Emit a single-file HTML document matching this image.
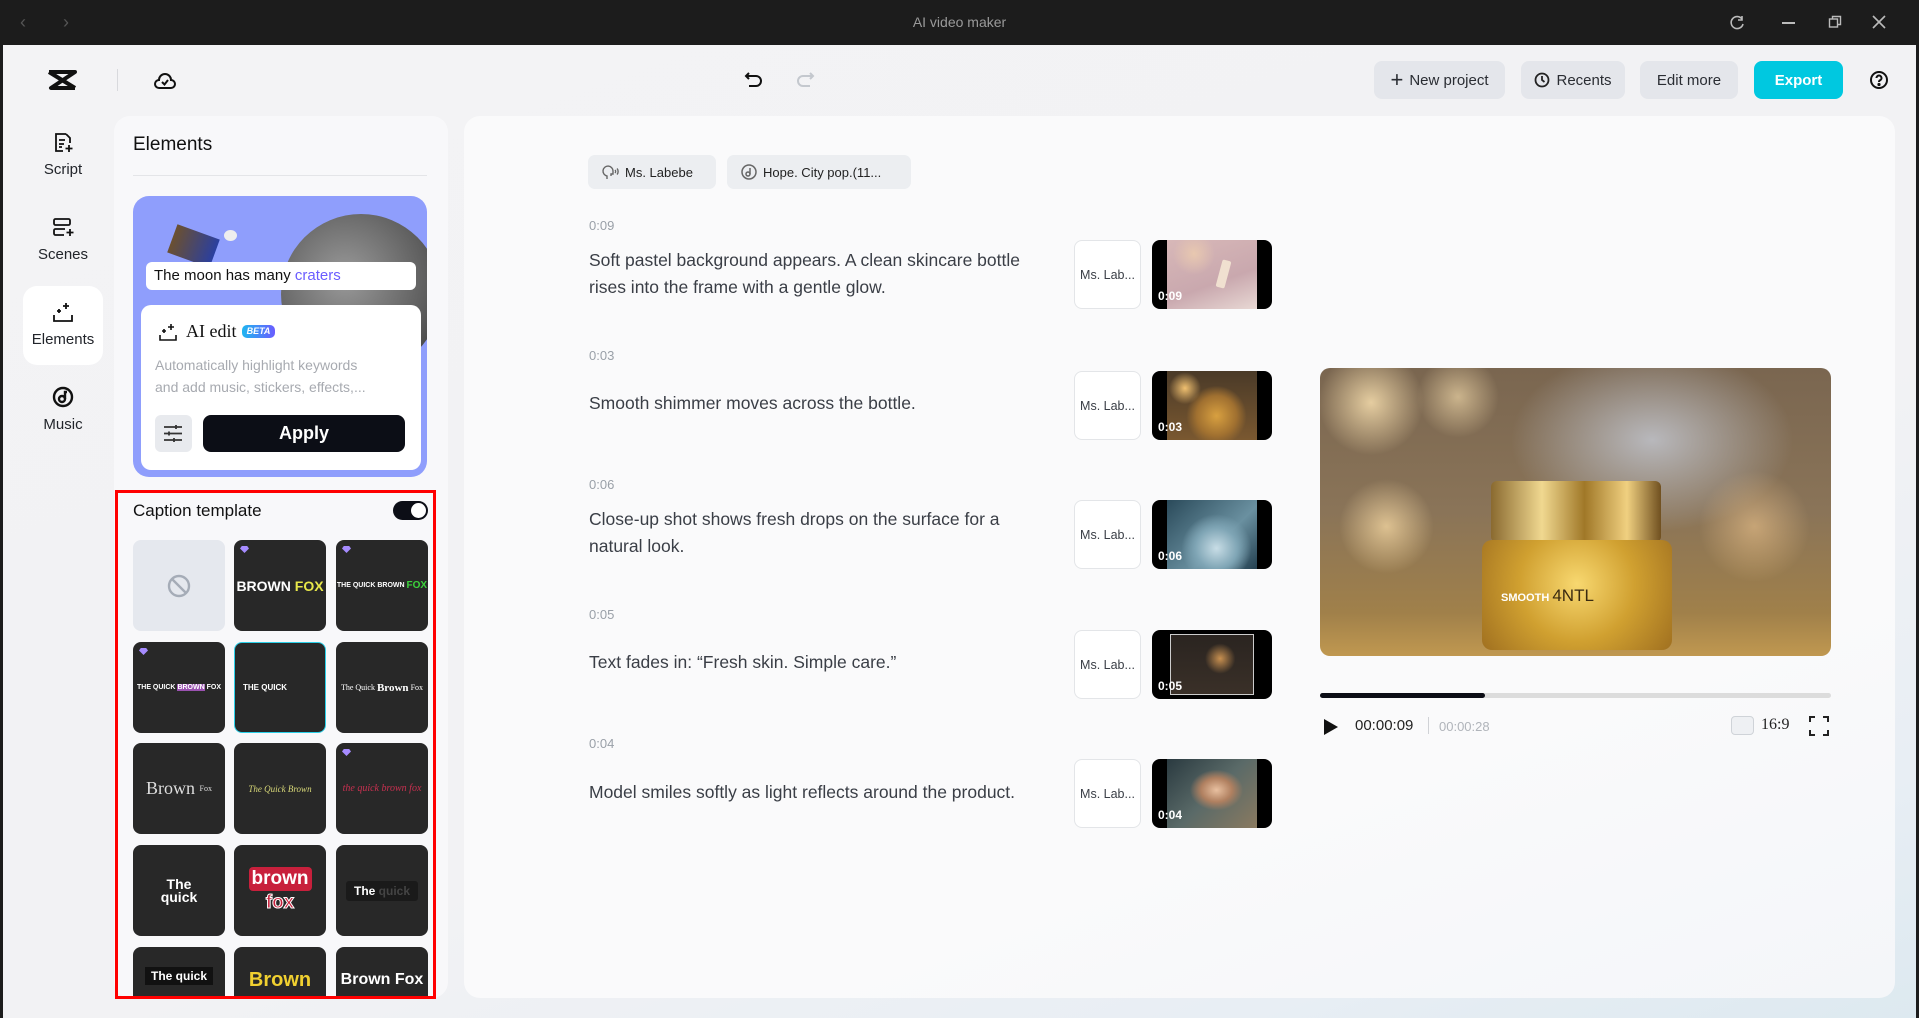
<!DOCTYPE html>
<html><head><meta charset="utf-8">
<style>
*{box-sizing:border-box;margin:0;padding:0}
body{width:1919px;height:1018px;overflow:hidden;font-family:"Liberation Sans",sans-serif;background:#1c1c1c;position:relative;color:#1a1d24}
.abs{position:absolute}
#app{position:absolute;left:3px;top:45px;width:1913px;height:973px;background:linear-gradient(160deg,#f3f3f5 0%,#f2f2f4 60%,#e8eef4 85%,#dde9f0 100%)}
.btn{position:absolute;top:61px;height:38px;border-radius:8px;background:#e4e6eb;font-size:15px;color:#2a2d33;display:flex;align-items:center;justify-content:center;gap:6px}
.rail{position:absolute;width:80px;text-align:center;font-size:15px;color:#22252b}
.tile{position:absolute;width:92px;height:91px;border-radius:8px;background:#282828;color:#fff;display:flex;align-items:center;justify-content:center;overflow:hidden;font-weight:bold}
.gem{position:absolute;left:6px;top:6px;width:9px;height:7px;background:#a68bff;clip-path:polygon(20% 0,80% 0,100% 35%,50% 100%,0 35%)}
.time{position:absolute;left:589px;font-size:13px;color:#9aa0a8}
.txt{position:absolute;left:589px;font-size:17.5px;color:#3a3e46;line-height:27px;width:450px}
.ms{position:absolute;left:1074px;width:67px;height:69px;border:1px solid #e3e5e8;border-radius:8px;background:#fff;font-size:12.5px;color:#3a3e46;display:flex;align-items:center;justify-content:center}
.th{position:absolute;left:1152px;width:120px;height:69px;border-radius:8px;background:#000;overflow:hidden}
.th .in{position:absolute;left:15px;right:15px;top:0;bottom:0}
.th span{position:absolute;left:6px;bottom:6px;color:#fff;font-size:12px;font-weight:bold}
</style></head><body>
<div class="abs" style="left:20px;top:12px;color:#555;font-size:18px">&#8249;</div>
<div class="abs" style="left:63px;top:12px;color:#555;font-size:18px">&#8250;</div>
<div class="abs" style="left:0;width:1919px;top:14px;text-align:center;color:#9a9a9a;font-size:14px">AI video maker</div>
<svg class="abs" style="left:1728px;top:14px" width="18" height="18" viewBox="0 0 18 18" fill="none" stroke="#bbb" stroke-width="1.6"><path d="M14 5A6 6 0 1 0 15 10"/><path d="M14 2v4h-4"/></svg>
<div class="abs" style="left:1782px;top:22px;width:13px;height:1.5px;background:#bbb"></div>
<svg class="abs" style="left:1828px;top:15px" width="14" height="14" fill="none" stroke="#bbb" stroke-width="1.4"><rect x="1.5" y="4" width="8" height="8"/><path d="M4.5 4V1.5h8v8H10"/></svg>
<svg class="abs" style="left:1871px;top:14px" width="16" height="16" stroke="#bbb" stroke-width="1.6"><path d="M2 2l12 12M14 2L2 14"/></svg>

<div id="app"></div>
<svg class="abs" style="left:47px;top:69px" width="30" height="22" viewBox="0 0 30 22"><path d="M2 3h26L4 19h24" fill="none" stroke="#111" stroke-width="4" stroke-linejoin="round"/><path d="M2 3l26 16" fill="none" stroke="#111" stroke-width="4"/></svg>
<div class="abs" style="left:117px;top:69px;width:1px;height:22px;background:#d8d9dd"></div>
<svg class="abs" style="left:153px;top:70px" width="24" height="20" viewBox="0 0 24 20" fill="none" stroke="#111" stroke-width="2"><path d="M6 18h12a4 4 0 0 0 0-8 6 6 0 0 0-12 0 4 4 0 0 0 0 8z"/><path d="M9 12l2.5 2.5L15 10"/></svg>
<svg class="abs" style="left:744px;top:70px" width="20" height="20" fill="none" stroke="#111" stroke-width="2"><path d="M5 3L2 6l3 3"/><path d="M2 6h10a5 5 0 0 1 0 10H5"/></svg>
<svg class="abs" style="left:795px;top:70px" width="20" height="20" fill="none" stroke="#c4c8ce" stroke-width="2"><path d="M15 3l3 3-3 3"/><path d="M18 6H8a5 5 0 0 0 0 10h7"/></svg>

<div class="btn" style="left:1374px;width:131px"><span style="font-size:22px;font-weight:300">+</span>New project</div>
<div class="btn" style="left:1521px;width:104px"><svg width="16" height="16" fill="none" stroke="#222" stroke-width="1.8"><circle cx="8" cy="8" r="6.5"/><path d="M8 4v4l2.5 2"/></svg>Recents</div>
<div class="btn" style="left:1640px;width:98px">Edit more</div>
<div class="btn" style="left:1754px;width:89px;background:#00c8e0;color:#fff;font-weight:bold">Export</div>
<svg class="abs" style="left:1869px;top:70px" width="20" height="20" fill="none" stroke="#111" stroke-width="2"><circle cx="10" cy="10" r="8"/><path d="M7.5 8a2.5 2.5 0 1 1 3.5 2.3c-.7.4-1 .9-1 1.7"/><circle cx="10" cy="14.5" r=".6" fill="#111"/></svg>

<svg class="abs" style="left:52px;top:132px" width="22" height="22" fill="none" stroke="#111" stroke-width="1.8"><path d="M14 2H4v17h7"/><path d="M14 2l4 4v5"/><path d="M7 8h6M7 12h5M7 15h3"/><path d="M17 13v7M13.5 16.5h7"/></svg>
<div class="rail" style="left:23px;top:161px">Script</div>
<svg class="abs" style="left:52px;top:217px" width="22" height="22" fill="none" stroke="#111" stroke-width="1.8"><rect x="2" y="2" width="16" height="6" rx="1.5"/><path d="M13 12H3.5A1.5 1.5 0 0 0 2 13.5v3A1.5 1.5 0 0 0 3.5 18H12"/><path d="M18 12v7M14.5 15.5h7"/></svg>
<div class="rail" style="left:23px;top:246px">Scenes</div>
<div class="abs" style="left:23px;top:286px;width:80px;height:79px;background:#fff;border-radius:14px"></div>
<svg class="abs" style="left:52px;top:301px" width="22" height="22" fill="none" stroke="#111" stroke-width="1.8"><path d="M2 14v6h18v-6"/><path d="M14 2v6M11 5h6M7 8v4M5 10h4" /></svg>
<div class="rail" style="left:23px;top:331px">Elements</div>
<svg class="abs" style="left:52px;top:386px" width="22" height="22" fill="none" stroke="#111" stroke-width="2.4"><circle cx="11" cy="11" r="9"/><circle cx="10" cy="13" r="3"/><path d="M13 13V6h2"/></svg>
<div class="rail" style="left:23px;top:416px">Music</div>

<div class="abs" style="left:114px;top:116px;width:334px;height:882px;background:#f8f8fa;border-radius:16px"></div>
<div class="abs" style="left:133px;top:134px;font-size:19px;color:#111">Elements</div>
<div class="abs" style="left:133px;top:175px;width:294px;height:1px;background:#e4e5e8"></div>
<div class="abs" style="left:133px;top:196px;width:294px;height:281px;background:#8f9efc;border-radius:16px;overflow:hidden">
 <div class="abs" style="left:148px;top:18px;width:160px;height:160px;border-radius:50%;background:radial-gradient(circle at 40% 40%,#9a9a9a,#5e5e5e 60%,#333)"></div>
 <div class="abs" style="left:38px;top:35px;width:45px;height:30px;background:linear-gradient(90deg,#6b5030,#2a3fa0);transform:rotate(20deg)"></div>
 <div class="abs" style="left:91px;top:34px;width:13px;height:11px;border-radius:50%;background:#eee"></div>
</div>
<div class="abs" style="left:146px;top:262px;width:270px;height:28px;background:#fff;border-radius:6px;font-size:15px;padding:5px 8px;color:#111">The moon has many <span style="color:#6a5cff">craters</span></div>
<div class="abs" style="left:141px;top:305px;width:280px;height:165px;background:#fff;border-radius:10px"></div>
<svg class="abs" style="left:158px;top:322px" width="20" height="20" fill="none" stroke="#111" stroke-width="1.6"><path d="M2 13v5h16v-5"/><path d="M13 2v6M10 5h6M6 7v4M4 9h4"/></svg>
<div class="abs" style="left:186px;top:321px;font-family:'Liberation Serif',serif;font-size:18px;color:#111">AI edit</div>
<div class="abs" style="left:242px;top:325px;width:33px;height:13px;border-radius:5px;background:linear-gradient(90deg,#1fb6f0,#6a5cff);color:#fff;font-size:9px;font-style:italic;font-weight:bold;text-align:center;line-height:13px">BETA</div>
<div class="abs" style="left:155px;top:354px;font-size:14px;color:#a7aab0;line-height:22px">Automatically highlight keywords<br>and add music, stickers, effects,...</div>
<div class="abs" style="left:155px;top:415px;width:37px;height:37px;background:#e8eaee;border-radius:6px"></div>
<svg class="abs" style="left:163px;top:424px" width="20" height="19" stroke="#333" stroke-width="1.8"><path d="M1 3h18M1 9.5h18M1 16h18"/><path d="M13 1v4M6 7.5v4M11 14v4"/></svg>
<div class="abs" style="left:203px;top:415px;width:202px;height:37px;background:#0c0e16;border-radius:8px;color:#fff;font-size:18px;font-weight:bold;text-align:center;line-height:37px">Apply</div>

<div class="abs" style="left:115px;top:490px;width:321px;height:509px;border:3px solid #ff0000"></div>
<div class="abs" style="left:133px;top:501px;font-size:17px;color:#111">Caption template</div>
<div class="abs" style="left:393px;top:501px;width:35px;height:19px;background:#0c0e16;border-radius:10px"><div class="abs" style="left:18px;top:2px;width:15px;height:15px;border-radius:50%;background:#fff"></div></div>
<div class="abs" style="left:118px;top:530px;width:315px;height:466px;overflow:hidden">
 <div class="tile" style="left:15px;top:10px;background:#e5e8ee"><svg width="24" height="24" fill="none" stroke="#a5acb7" stroke-width="2.4"><circle cx="12" cy="12" r="10"/><path d="M5 5l14 14"/></svg></div>
 <div class="tile" style="left:116px;top:10px;font-size:14px"><div class="gem"></div>BROWN&nbsp;<span style="color:#e8e84a">FOX</span></div>
 <div class="tile" style="left:218px;top:10px;font-size:7px"><div class="gem"></div>THE QUICK BROWN&nbsp;<span style="color:#3cd23c;font-size:10px">FOX</span></div>
 <div class="tile" style="left:15px;top:112px;font-size:7px"><div class="gem"></div>THE QUICK&nbsp;<span style="background:#9a52b0">BROWN</span>&nbsp;FOX</div>
 <div class="tile" style="left:116px;top:112px;font-size:8px;border:1px solid #2ad0e8;justify-content:flex-start;padding-left:8px">THE QUICK</div>
 <div class="tile" style="left:218px;top:112px;font-size:8px;font-family:'Liberation Serif',serif;font-weight:normal">The Quick&nbsp;<b style="font-size:11px">Brown</b>&nbsp;Fox</div>
 <div class="tile" style="left:15px;top:213px;font-size:18px;font-family:'Liberation Serif',serif;font-weight:normal;color:#ddd">Brown&nbsp;<span style="font-size:8px">Fox</span></div>
 <div class="tile" style="left:116px;top:213px;font-size:9px;font-style:italic;font-family:'Liberation Serif',serif;color:#d8d878;font-weight:normal">The Quick Brown</div>
 <div class="tile" style="left:218px;top:213px;font-size:10px;font-style:italic;font-family:'Liberation Serif',serif;color:#c83050;font-weight:normal"><div class="gem"></div>the quick brown fox</div>
 <div class="tile" style="left:15px;top:315px;font-size:14px;line-height:13px;text-align:center">The<br>quick</div>
 <div class="tile" style="left:116px;top:315px;flex-direction:column;font-size:19px;line-height:24px;color:#fff"><span style="background:#c8203c;border-radius:4px;padding:0 3px">brown</span><span style="color:#c8203c;-webkit-text-stroke:1px #fff">fox</span></div>
 <div class="tile" style="left:218px;top:315px;font-size:12px"><span style="background:#1a1a1a;padding:3px 8px;border-radius:3px">The <span style="color:#444">quick</span></span></div>
 <div class="tile" style="left:15px;top:417px;font-size:12px;align-items:flex-start;padding-top:20px"><span style="background:#111;padding:2px 6px">The quick</span></div>
 <div class="tile" style="left:116px;top:417px;font-size:20px;color:#f0d030;align-items:flex-start;padding-top:22px">Brown</div>
 <div class="tile" style="left:218px;top:417px;font-size:16px;align-items:flex-start;padding-top:24px">Brown Fox</div>
</div>

<div class="abs" style="left:464px;top:116px;width:1431px;height:882px;background:linear-gradient(160deg,#fafafb 70%,#f4f6f9);border-radius:16px"></div>
<div class="abs" style="left:588px;top:155px;width:128px;height:34px;background:#eceef1;border-radius:7px;font-size:13px;display:flex;align-items:center;padding-left:14px;gap:5px;color:#222"><svg width="18" height="18" fill="none" stroke="#666" stroke-width="1.4"><path d="M5 16v-3a5 5 0 1 1 6-5v3H9v2"/><path d="M13 7c.8.8.8 2.2 0 3M15 5.5c1.5 1.5 1.5 4.5 0 6"/></svg>Ms. Labebe</div>
<div class="abs" style="left:727px;top:155px;width:184px;height:34px;background:#eceef1;border-radius:7px;font-size:13px;display:flex;align-items:center;padding-left:14px;gap:6px;color:#222"><svg width="16" height="16" fill="none" stroke="#666" stroke-width="1.5"><circle cx="8" cy="8" r="7"/><circle cx="7" cy="10" r="2"/><path d="M9 10V4"/></svg>Hope. City pop.(11...</div>

<div class="time" style="top:218px">0:09</div>
<div class="txt" style="top:247px">Soft pastel background appears. A clean skincare bottle rises into the frame with a gentle glow.</div>
<div class="ms" style="top:240px">Ms. Lab...</div>
<div class="th" style="top:240px"><div class="in" style="background:radial-gradient(circle at 30% 20%,#e8c8b0 0,transparent 25%),linear-gradient(160deg,#d8b8b8,#c9a8ae 60%,#e8d8d4)"><div class="abs" style="left:52px;top:20px;width:9px;height:28px;background:#f0e0d0;transform:rotate(15deg);border-radius:2px"></div></div><span>0:09</span></div>

<div class="time" style="top:348px">0:03</div>
<div class="txt" style="top:390px">Smooth shimmer moves across the bottle.</div>
<div class="ms" style="top:371px">Ms. Lab...</div>
<div class="th" style="top:371px"><div class="in" style="background:radial-gradient(circle at 20% 25%,#f0c070 0,transparent 18%),radial-gradient(circle at 55% 65%,#d8a040 0,#a07030 30%,transparent 45%),linear-gradient(#4a3a28,#7a5830)"></div><span>0:03</span></div>

<div class="time" style="top:477px">0:06</div>
<div class="txt" style="top:506px">Close-up shot shows fresh drops on the surface for a natural look.</div>
<div class="ms" style="top:500px">Ms. Lab...</div>
<div class="th" style="top:500px"><div class="in" style="background:radial-gradient(ellipse at 55% 70%,#c8dde6 0,#7fa5b5 30%,transparent 50%),linear-gradient(135deg,#2a4a5a,#6a90a0 60%,#244050)"></div><span>0:06</span></div>

<div class="time" style="top:607px">0:05</div>
<div class="txt" style="top:649px">Text fades in: “Fresh skin. Simple care.”</div>
<div class="ms" style="top:630px">Ms. Lab...</div>
<div class="th" style="top:630px"><div class="in" style="left:18px;right:18px;top:4px;bottom:4px;border:1px solid #ccc;background:radial-gradient(circle at 60% 40%,#c89050 0,transparent 25%),linear-gradient(#2a2420,#3a3028)"></div><span>0:05</span></div>

<div class="time" style="top:736px">0:04</div>
<div class="txt" style="top:779px;width:480px">Model smiles softly as light reflects around the product.</div>
<div class="ms" style="top:759px">Ms. Lab...</div>
<div class="th" style="top:759px"><div class="in" style="background:radial-gradient(ellipse at 55% 45%,#e8c0a0 0,#b08060 22%,transparent 38%),linear-gradient(135deg,#2a3a40,#5a6a68 50%,#8a7a60)"></div><span>0:04</span></div>

<div class="abs" style="left:1320px;top:368px;width:511px;height:288px;border-radius:10px;overflow:hidden;background:
radial-gradient(circle at 10% 12%,rgba(255,230,180,.8) 0,transparent 10%),
radial-gradient(circle at 27% 10%,rgba(255,230,180,.6) 0,transparent 9%),
radial-gradient(circle at 13% 55%,rgba(255,225,170,.7) 0,transparent 10%),
radial-gradient(circle at 85% 55%,rgba(255,210,150,.5) 0,transparent 12%),
radial-gradient(ellipse at 65% 25%,#b8b8bc 0,transparent 30%),
linear-gradient(180deg,#7a6650 0%,#8a7458 50%,#a0804a 85%,#c09850 100%)">
 <div class="abs" style="left:171px;top:113px;width:170px;height:60px;border-radius:6px 6px 4px 4px;background:linear-gradient(90deg,#8a6a30,#f0d890 30%,#a07828 55%,#f0d080 80%,#705020)"></div>
 <div class="abs" style="left:162px;top:172px;width:190px;height:110px;border-radius:10px;background:radial-gradient(circle at 50% 40%,#f8d870,#d0a030 50%,#a07020)"></div>
 <div class="abs" style="left:181px;top:218px;color:#fff;font-size:11px;font-weight:bold">SMOOTH <span style="color:#3a2a10;font-size:17px;font-weight:normal">4NTL</span></div>
</div>
<div class="abs" style="left:1320px;top:693px;width:511px;height:5px;background:#dcdcdc;border-radius:3px"></div>
<div class="abs" style="left:1320px;top:693px;width:165px;height:5px;background:#0c0e16;border-radius:3px"></div>
<svg class="abs" style="left:1324px;top:719px" width="14" height="16"><path d="M0 0L14 8L0 16z" fill="#111"/></svg>
<div class="abs" style="left:1355px;top:717px;font-size:15px;color:#222">00:00:09</div>
<div class="abs" style="left:1428px;top:717px;width:1px;height:17px;background:#d0d2d6"></div>
<div class="abs" style="left:1439px;top:719px;font-size:13px;color:#b0b4ba">00:00:28</div>
<div class="abs" style="left:1731px;top:716px;width:23px;height:19px;border:1px solid #cfd3d8;background:#eef0f3;border-radius:4px"></div>
<div class="abs" style="left:1761px;top:716px;font-size:16px;font-family:'Liberation Serif',serif;color:#222">16:9</div>
<svg class="abs" style="left:1809px;top:716px" width="20" height="20" fill="none" stroke="#222" stroke-width="2"><path d="M1 6V1h5M14 1h5v5M19 14v5h-5M6 19H1v-5"/></svg>
</body></html>
